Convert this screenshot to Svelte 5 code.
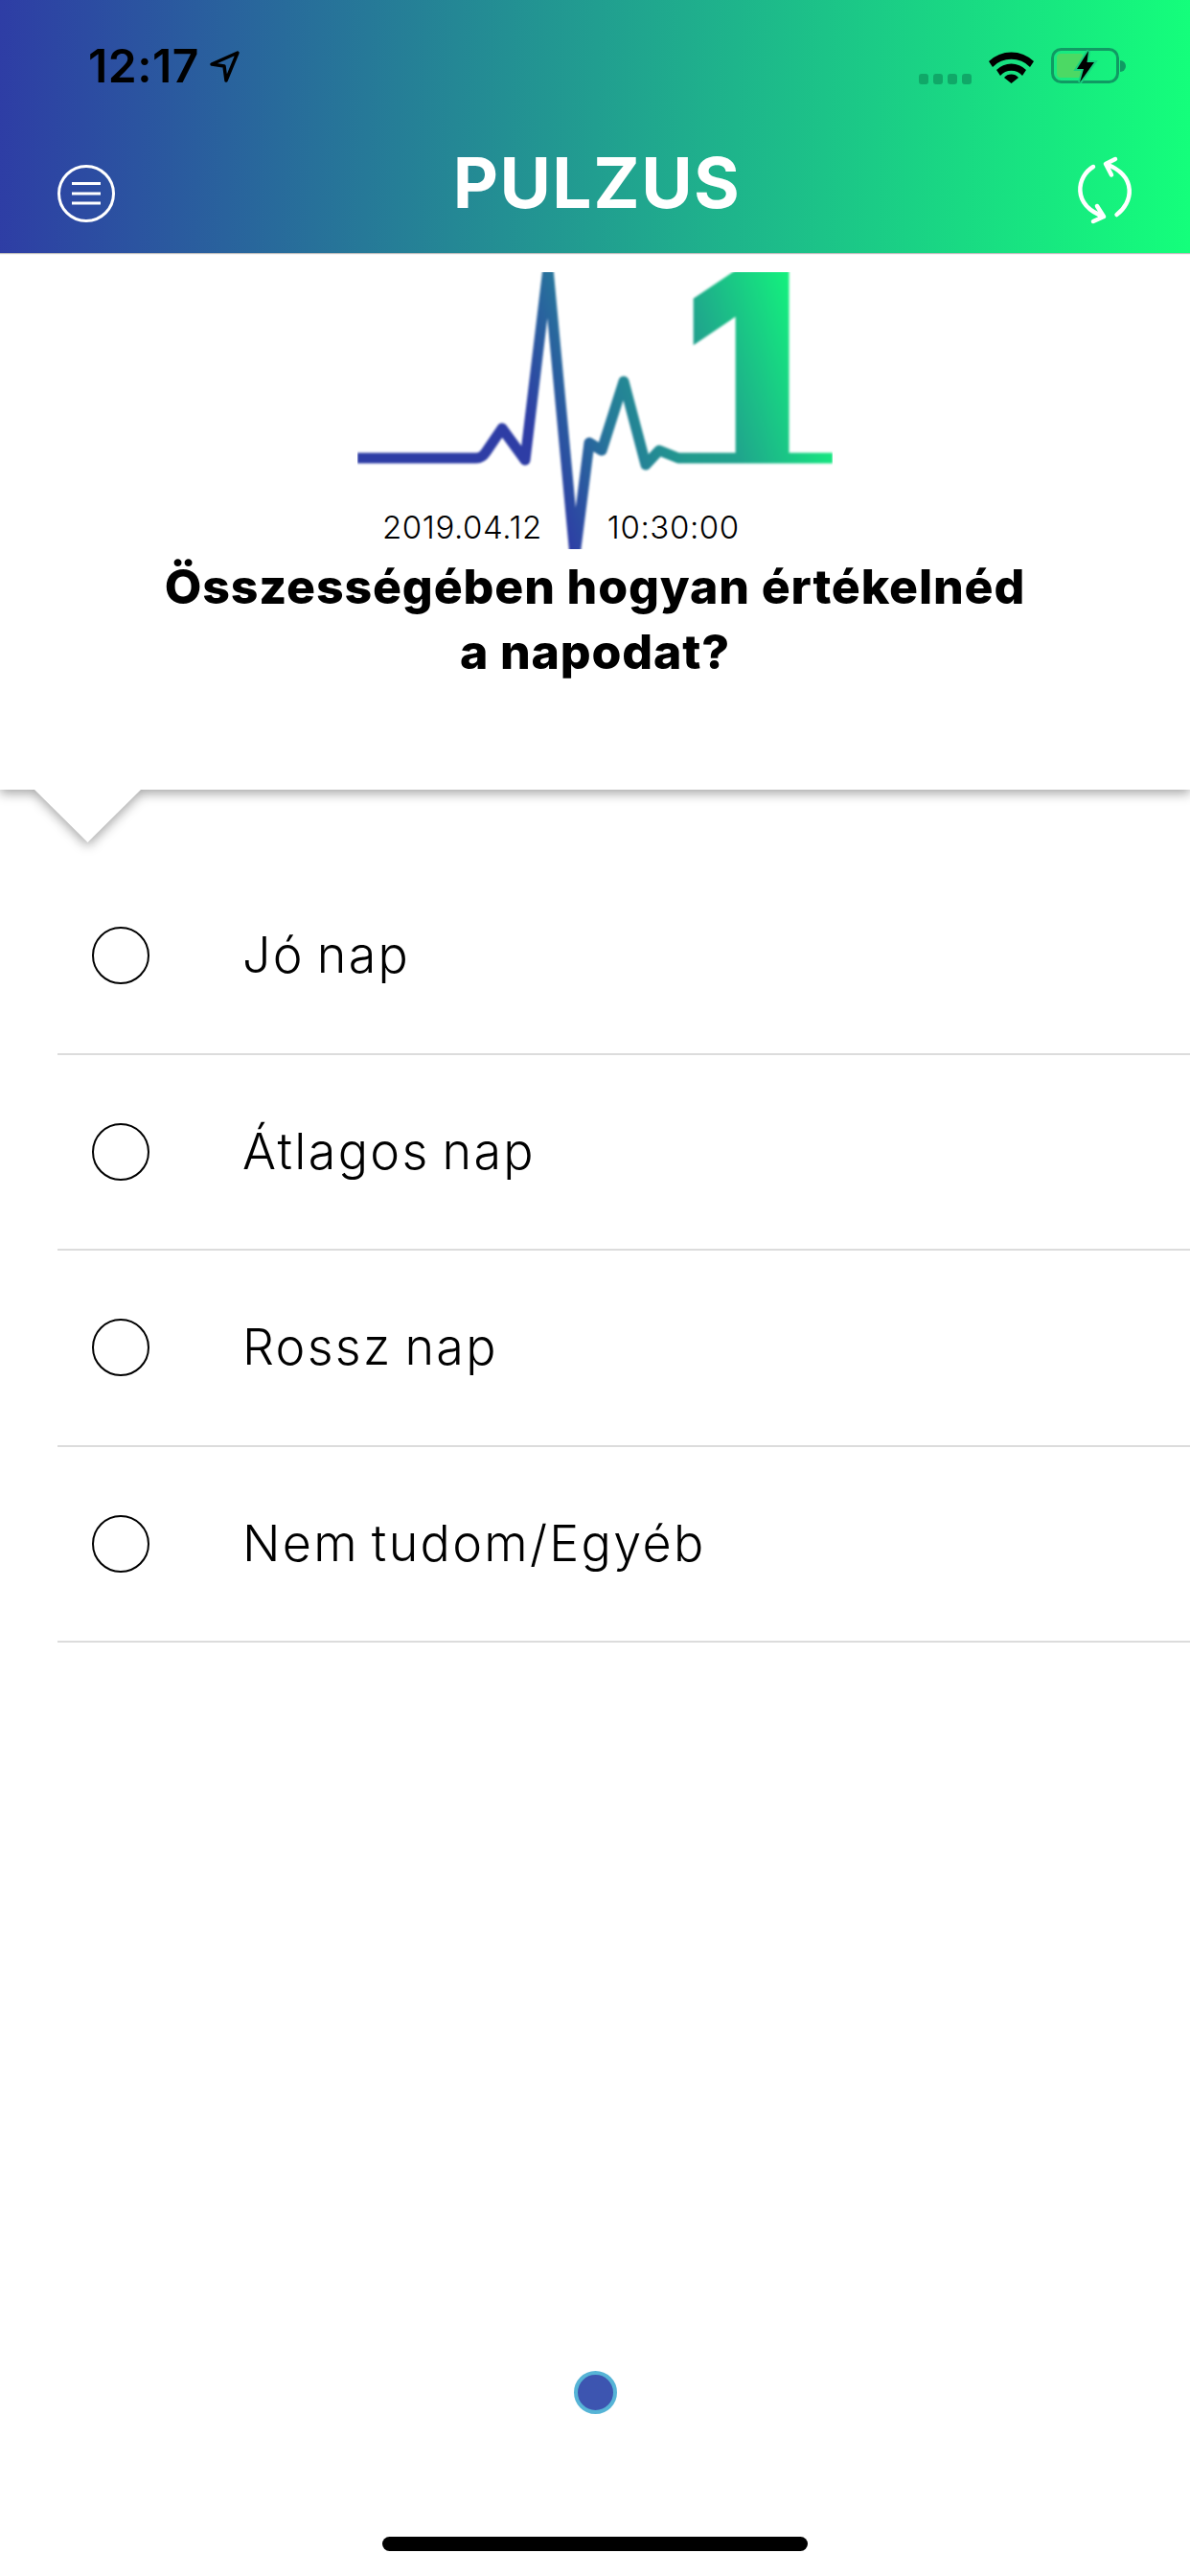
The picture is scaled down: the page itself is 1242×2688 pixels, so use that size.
<script>
  const answers = ["Jó nap", "Átlagos nap", "Rossz nap", "Nem tudom/Egyéb"];
  const pulse = "M373 478 H497 Q503 478 507 472 L524 447 L548 480 L572 280 L600 580 L615 462 L628 470 L651 398 L674 485 L688 470 L708 478 H869";
</script>

<div class="page">
  <header class="top">
    <div class="status">
      <div class="clock">
        <span class="time">12:17</span>
        <svg class="arrow" viewBox="216 50 37 38" aria-hidden="true">
          <path d="M248 55 L221 67 L234 69 L236 84 Z" />
        </svg>
      </div>
      <div class="indicators">
        <div class="signal"><i></i><i></i><i></i><i></i></div>
        <svg class="wifi" viewBox="0 0 47 37" aria-hidden="true">
          <path d="M0 14 A34 34 0 0 1 47 14 L43 20 A27 27 0 0 0 4 20 Z" />
          <path d="M8 23 A22 22 0 0 1 39 23 L35 29 A15 15 0 0 0 12 29 Z" />
          <path d="M16 31 A10 10 0 0 1 31 31 L23.5 37 Z" />
        </svg>
        <svg class="battery" viewBox="0 0 80 37" aria-hidden="true">
          <rect x="1.5" y="1.5" width="68" height="34" rx="9" fill="none" stroke="#109a63" stroke-width="3" />
          <path d="M72 13 A6 6 0 0 1 72 25 Z" fill="#109a63" />
          <rect x="6" y="6" width="28" height="25" rx="4" fill="#4cd964" />
          <path d="M39 3 L27 22 H34 L30 36 L45 15 H37.500 Z" fill="#17d07f" stroke="#17d07f" stroke-width="4" />
          <path d="M39 3 L27 22 H34 L30 36 L45 15 H37.500 Z" fill="#000" />
        </svg>
      </div>
    </div>
    <div class="nav">
      <svg class="menu" viewBox="0 0 60 60" aria-hidden="true">
        <circle cx="30" cy="30" r="28.500" />
        <path d="M15 19.500 H45 M15 30 H45 M15 40 H45" />
      </svg>
      <h1>PULZUS</h1>
      <svg class="sync" viewBox="1118 164 66 72" aria-hidden="true">
        <path d="M1139 176 C1122 186 1116 216 1150 228 M1143 217 L1150 228 L1139 233" />
        <path d="M1163.500 226 C1180 214 1186 186 1152 173 M1162 168 L1152 173 L1158 184.500" />
      </svg>
    </div>
  </header>

  <section class="panel">
    <div class="logo">
      <svg viewBox="373 284 496 289" aria-hidden="true">
        <defs>
          <linearGradient id="pulse-fill" gradientUnits="userSpaceOnUse" x1="500" y1="560" x2="869" y2="440">
            <stop offset="0.22" stop-color="#2e3da5" />
            <stop offset="0.42" stop-color="#26789a" />
            <stop offset="0.6" stop-color="#219a8e" />
            <stop offset="0.72" stop-color="#20a28d" />
            <stop offset="1" stop-color="#14ee7e" />
          </linearGradient>
        </defs>
        <g class="soft">
          <text class="digit" x="774" y="478" fill="url(#pulse-fill)" stroke="url(#pulse-fill)">1</text>
          <path class="trace" d={pulse} stroke="url(#pulse-fill)" />
        </g>
      </svg>
      <div class="stamp">
        <span>2019.04.12</span>
        <span>10:30:00</span>
      </div>
    </div>
    <h2>Összességében hogyan értékelnéd<br />a napodat?</h2>
  </section>

  <ul class="answers">
    {#each answers as answer}
      <li>
        <span class="radio"></span>
        <span class="label">{answer}</span>
      </li>
    {/each}
  </ul>

  <div class="pager"><span class="dot"></span></div>
  <div class="home"></div>
</div>

<style>
  :global(body) {
    margin: 0;
    background: #fff;
  }

  .page {
    width: 1242px;
    height: 2688px;
    display: flex;
    flex-direction: column;
    overflow: hidden;
    font-family: Inter, "Liberation Sans", sans-serif;
    color: #000;
    background: #fff;
  }

  .top {
    position: relative;
    z-index: 2;
    height: 264px;
    flex: none;
    background: linear-gradient(91deg, #2e3da5 0%, #14ff7b 100%);
    box-shadow: 0 1px 1px rgba(0, 0, 0, 0.25);
  }

  .status {
    height: 132px;
    display: flex;
    justify-content: space-between;
    padding: 50px 65px 0 92px;
    box-sizing: border-box;
  }

  .clock {
    display: flex;
    align-items: flex-start;
    gap: 8px;
  }

  .time {
    font-size: 48px;
    line-height: 37px;
    font-weight: 600;
    letter-spacing: 0.500px;
  }

  .arrow {
    width: 37px;
    height: 38px;
    fill: none;
    stroke: #000;
    stroke-width: 3.500;
    stroke-linejoin: round;
  }

  .indicators {
    display: flex;
    align-items: flex-start;
  }

  .signal {
    display: flex;
    gap: 5px;
    margin-top: 27px;
    margin-right: 18px;
  }

  .signal i {
    width: 10px;
    height: 11px;
    border-radius: 3px;
    background: #10a868;
  }

  .wifi {
    width: 47px;
    height: 37px;
    margin-right: 18px;
  }

  .battery {
    width: 80px;
    height: 37px;
  }

  .nav {
    height: 132px;
    display: grid;
    grid-template-columns: 1fr auto 1fr;
    align-items: center;
    padding: 0 56px 0 60px;
    box-sizing: border-box;
  }

  .menu {
    width: 60px;
    height: 60px;
    margin-top: 8px;
    fill: none;
    stroke: #fff;
    stroke-width: 3;
  }

  h1 {
    margin: 0 0 15px;
    color: #fff;
    font-size: 73px;
    line-height: 1;
    font-weight: 700;
    letter-spacing: 1.500px;
  }

  .sync {
    justify-self: end;
    width: 66px;
    height: 72px;
    fill: none;
    stroke: #fff;
    stroke-width: 4.500;
    stroke-linecap: round;
    stroke-linejoin: round;
  }

  .panel {
    position: relative;
    z-index: 1;
    height: 560px;
    flex: none;
    box-sizing: border-box;
    padding-top: 20px;
    text-align: center;
    background: #fff;
    filter: drop-shadow(0 4px 6px rgba(0, 0, 0, 0.35));
  }

  .panel::after {
    content: "";
    position: absolute;
    top: 100%;
    left: 36px;
    width: 111px;
    height: 55px;
    background: #fff;
    clip-path: polygon(0 0, 100% 0, 50% 100%);
  }

  .logo {
    position: relative;
    width: 496px;
    height: 289px;
    margin: 0 auto;
  }

  .logo svg {
    display: block;
    width: 496px;
    height: 289px;
  }

  .soft {
    filter: blur(0.8px);
  }

  .digit {
    font-family: Inter, sans-serif;
    font-size: 268px;
    font-weight: 900;
    text-anchor: middle;
    stroke-width: 3;
  }

  .trace {
    fill: none;
    stroke-width: 11;
    stroke-linejoin: round;
  }

  .stamp {
    position: absolute;
    left: 26px;
    top: 246px;
    display: flex;
    gap: 68px;
    font-size: 33px;
    line-height: 40px;
    font-weight: 300;
    letter-spacing: 0.600px;
    white-space: nowrap;
  }

  h2 {
    margin: 5px 0 0;
    font-size: 50px;
    line-height: 68px;
    font-weight: 800;
    letter-spacing: 0.850px;
  }

  .answers {
    list-style: none;
    margin: 72px 0 0 60px;
    padding: 0;
  }

  .answers li {
    height: 204.600px;
    box-sizing: border-box;
    display: flex;
    align-items: center;
    gap: 97px;
    padding-left: 36px;
    border-bottom: 2px solid #dcdcdc;
  }

  .radio {
    width: 60px;
    height: 60px;
    box-sizing: border-box;
    border: 2px solid #000;
    border-radius: 50%;
  }

  .label {
    font-size: 52px;
    line-height: 60px;
    font-weight: 300;
    letter-spacing: 2.300px;
    word-spacing: -4px;
  }

  .pager {
    flex: 1;
    display: flex;
    justify-content: center;
    align-items: flex-end;
    padding-bottom: 128px;
  }

  .dot {
    width: 45px;
    height: 45px;
    box-sizing: border-box;
    border: 4px solid #56b4d6;
    border-radius: 50%;
    background: #3d55b0;
  }

  .home {
    flex: none;
    width: 444px;
    height: 15px;
    margin: 0 auto 26px;
    border-radius: 8px;
    background: #000;
  }
</style>
